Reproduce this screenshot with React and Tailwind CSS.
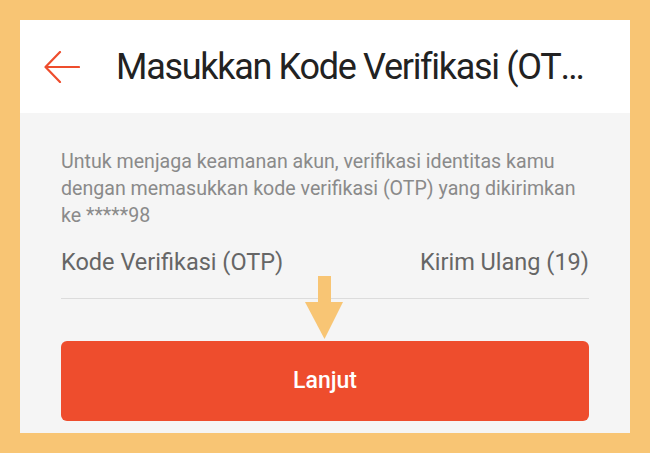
import React from 'react';

const BackArrow = () => (
  <svg width="36" height="32" viewBox="0 0 36 32" fill="none" className="shrink-0">
    <path d="M35 16H2M16 1L1.5 16L16 31" stroke="#ee4d2d" strokeWidth="2.2" strokeLinecap="round" strokeLinejoin="round" />
  </svg>
);

const DownArrow = () => (
  <svg width="40" height="64" viewBox="0 0 40 64" className="absolute left-[305px] top-[276px]">
    <rect x="13" y="0" width="13" height="27" fill="#f8c574" />
    <polygon points="0,26 38,26 19.5,63" fill="#f8c574" />
  </svg>
);

export default function App() {
  return (
    <div className="relative w-[650px] h-[453px] bg-[#f8c574] p-[20px] font-['Roboto',sans-serif]">
      <div className="w-[610px] h-[413px] bg-[#f5f5f5] flex flex-col">
        {/* Header */}
        <div className="h-[93px] bg-white flex items-center pl-[24px] pr-[20px]">
          <BackArrow />
          <h1 className="ml-[36px] w-[474px] text-[36px] tracking-[-1.3px] text-[#222] truncate leading-[44px]">
            Masukkan Kode Verifikasi (OTP)
          </h1>
        </div>

        <div className="px-[41px] pt-[35px]">
          <p className="text-[19.6px] leading-[27px] text-[#8a8a8a]">
            Untuk menjaga keamanan akun, verifikasi identitas kamu dengan memasukkan kode verifikasi (OTP) yang dikirimkan ke *****98
          </p>

          <div className="mt-[19px] flex items-center justify-between text-[23.5px] leading-[28px] text-[#666] pb-[22px] border-b border-[#dcdcdc]">
            <span>Kode Verifikasi (OTP)</span>
            <span>Kirim Ulang (19)</span>
          </div>

          <button className="mt-[42px] w-full h-[80px] rounded-[6px] bg-[#ee4d2d] text-white text-[23px] font-medium">
            Lanjut
          </button>
        </div>
      </div>
      <DownArrow />
    </div>
  );
}
